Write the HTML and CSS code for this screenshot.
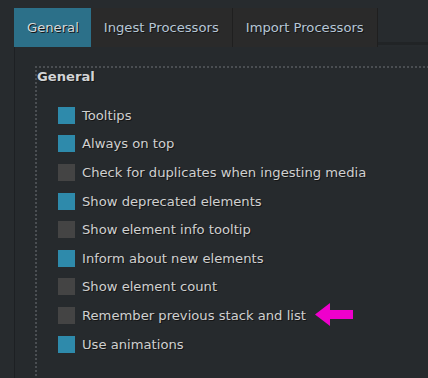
FILE: index.html
```html
<!DOCTYPE html>
<html lang="en">
<head>
    <meta charset="UTF-8">
    <title>Preferences</title>
    <link rel="stylesheet" href="styles.css">
</head>
<body>

<div class="tabs">
    <div class="tab active">General</div>
    <div class="tab">Ingest Processors</div>
    <div class="tab">Import Processors</div>
    <div class="tab-fill"></div>
</div>

<div class="panel">
    <div class="group">
        <div class="group-title">General</div>
        <div class="options">
            <div class="option"><span class="box on"></span>Tooltips</div>
            <div class="option"><span class="box on"></span>Always on top</div>
            <div class="option"><span class="box"></span>Check for duplicates when ingesting media</div>
            <div class="option"><span class="box on"></span>Show deprecated elements</div>
            <div class="option"><span class="box"></span>Show element info tooltip</div>
            <div class="option"><span class="box on"></span>Inform about new elements</div>
            <div class="option"><span class="box"></span>Show element count</div>
            <div class="option"><span class="box"></span>Remember previous stack and list
                <svg class="arrow" width="39" height="24" viewBox="0 0 39 24">
                    <polygon points="0,11.5 15,0 15,7 38,7 38,16 15,16 15,23" fill="#ee00cc"/>
                </svg>
            </div>
            <div class="option"><span class="box on"></span>Use animations</div>
        </div>
    </div>
</div>

</body>
</html>
```

FILE: styles.css
```css
* {
    box-sizing: border-box;
}
html, body {
    margin: 0;
    height: 100%;
}
body {
    background-color: #272b2e;
    font-family: "DejaVu Sans", sans-serif;
    font-size: 13.15px;
    color: #cfd0d0;
    overflow: hidden;
}
.tabs {
    display: flex;
    margin: 8px 0 0 14px;
    height: 39px;
}
.tab {
    display: flex;
    align-items: center;
    padding: 0 13px;
    background-color: #2a2a2a;
    color: #b6c6d6;
    border-right: 1px solid #1f1f1f;
    text-shadow: 1px 1px 0 #151515;
}
.tab.active {
    background-color: #2c7089;
    color: #d4d8da;
    border-right: none;
    padding: 0 12px 0 13px;
}
.tab-fill {
    flex: 1;
    border-bottom: 3px solid #212426;
    height: 37px;
}
.panel {
    margin-left: 14px;
    height: 400px;
    border-left: 1px solid #1d2023;
    background-color: #262a2d;
    padding: 19px 0 0 20px;
}
.group {
    height: 100%;
    padding: 2px 0 0 2px;
    background-image:
        linear-gradient(to right, #4a4e52 50%, transparent 50%),
        linear-gradient(to bottom, #4a4e52 50%, transparent 50%);
    background-size: 4px 2px, 2px 4px;
    background-repeat: repeat-x, repeat-y;
    background-position: 0 0, 0 0;
}
.group-title {
    font-weight: bold;
    color: #d2d4d6;
    padding: 1px 0 0 0;
    line-height: 15px;
    text-shadow: 1px 1px 0 #151515;
}
.options {
    padding: 17px 0 0 21px;
}
.option {
    display: flex;
    align-items: center;
    height: 28.6px;
    text-shadow: 1px 1px 0 #161616;
}
.box {
    width: 17px;
    height: 17px;
    background-color: #444444;
    margin-right: 7px;
    flex: none;
}
.box.on {
    background-color: #2e8aab;
}
.arrow {
    margin-left: 9px;
}
```
